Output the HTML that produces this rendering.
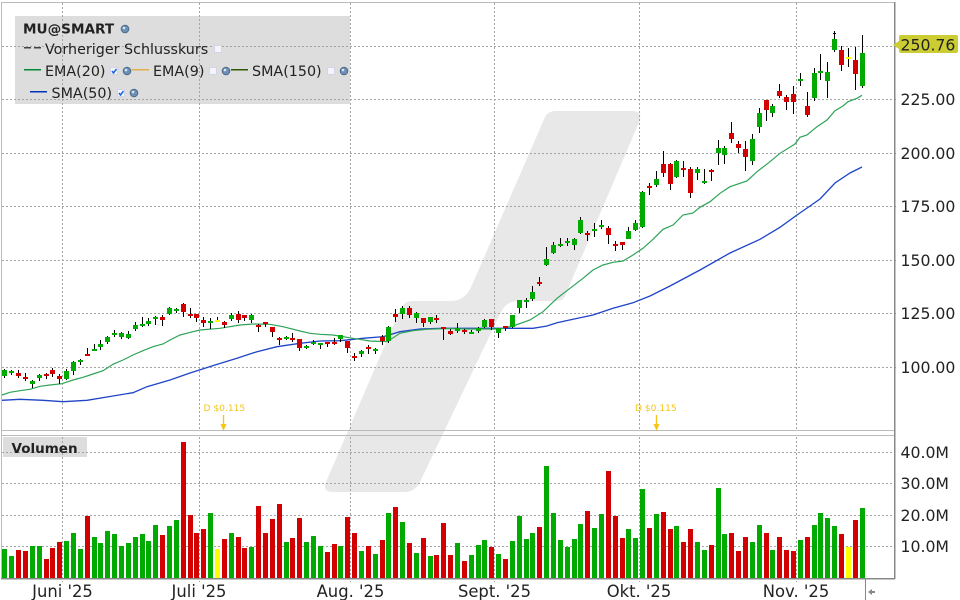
<!DOCTYPE html>
<html lang="de">
<head>
<meta charset="utf-8">
<title>MU@SMART</title>
<style>
html,body{margin:0;padding:0;background:#fff;width:960px;height:600px;overflow:hidden}
svg{display:block;position:absolute;left:0;top:0}
text{font-family:"DejaVu Sans","Liberation Sans",sans-serif;fill:#222}
.ax{font-size:15.7px}
.dt{font-size:16.4px;text-anchor:middle}
.lg{font-size:14.3px}
.dv{font-size:9.1px;fill:#f5c518}
</style>
</head>
<body>
<svg width="960" height="600" viewBox="0 0 960 600" xmlns="http://www.w3.org/2000/svg">
<!-- watermark -->
<path fill="#e8e8e8" d="M545 117Q548 111 556 111L632 111Q642 111 640 120L565 296Q563 301 556 301L518 301Q506 301 500 314L420 482Q415 492 405 492L333 492Q322 492 326 482L400 310Q404 301 412 301L450 301Q466 301 472 285Z"/>
<!-- legend backgrounds -->
<rect x="15" y="16" width="335" height="88" fill="#ddd"/>
<rect x="3" y="437" width="84" height="20" fill="#ddd"/>
<!-- grid -->
<g stroke="#a4a4a4" stroke-width="1" stroke-dasharray="2 2" fill="none" shape-rendering="crispEdges">
<path d="M2 46.5H896M2 99.5H896M2 153.5H896M2 206.5H896M2 260.5H896M2 313.5H896M2 367.5H896"/>
<path d="M2 452.5H894M2 483.5H894M2 515.5H894M2 546.5H894"/>
<path d="M62.5 3V430M199.5 3V430M350.5 3V430M494.5 3V430M639.5 3V430M796.5 3V430"/>
<path d="M62.5 437V582M199.5 437V582M350.5 437V582M494.5 437V582M639.5 437V582M796.5 437V582"/>
</g>
<!-- frame -->
<g stroke="#bbb" stroke-width="1" fill="none" shape-rendering="crispEdges">
<path d="M1.5 2V578M1 2.5H894M1 430.5H894M1 435.5H894"/>
</g>
<g stroke="#888" stroke-width="1.5" fill="none" shape-rendering="crispEdges">
<path d="M894.5 2V579M1 578.5H895"/>
</g>
<path d="M865.5 578V600" stroke="#888" stroke-width="1" shape-rendering="crispEdges"/>
<path d="M868 592L872 589V591H875V593H872V595Z" fill="#888"/>

<!-- volume bars -->
<path fill="#00aa00" shape-rendering="crispEdges" d="M2 549h5V578h-5zM9 556h5V578h-5zM30 546h5V578h-5zM37 546h5V578h-5zM64 541h5V578h-5zM71 533h5V578h-5zM78 549h5V578h-5zM92 537h5V578h-5zM98 543h5V578h-5zM105 531h5V578h-5zM112 534h5V578h-5zM119 546h5V578h-5zM126 543h5V578h-5zM133 537h5V578h-5zM140 534h5V578h-5zM146 541h5V578h-5zM153 525h5V578h-5zM167 526h5V578h-5zM174 520h5V578h-5zM208 513h5V578h-5zM229 533h5V578h-5zM249 547h5V578h-5zM284 542h5V578h-5zM304 542h5V578h-5zM311 536h5V578h-5zM318 546h5V578h-5zM338 546h5V578h-5zM359 551h5V578h-5zM373 554h5V578h-5zM386 513h5V578h-5zM400 522h5V578h-5zM414 553h5V578h-5zM428 556h5V578h-5zM455 543h5V578h-5zM469 555h5V578h-5zM476 545h5V578h-5zM482 540h5V578h-5zM496 554h5V578h-5zM510 541h5V578h-5zM517 516h5V578h-5zM524 539h5V578h-5zM530 533h5V578h-5zM544 466h5V578h-5zM551 513h5V578h-5zM558 540h5V578h-5zM565 547h5V578h-5zM572 539h5V578h-5zM578 524h5V578h-5zM592 528h5V578h-5zM599 514h5V578h-5zM626 529h5V578h-5zM633 538h5V578h-5zM640 489h5V578h-5zM654 514h5V578h-5zM674 526h5V578h-5zM695 542h5V578h-5zM702 550h5V578h-5zM716 488h5V578h-5zM722 534h5V578h-5zM750 542h5V578h-5zM757 525h5V578h-5zM770 550h5V578h-5zM798 540h5V578h-5zM812 525h5V578h-5zM818 513h5V578h-5zM825 518h5V578h-5zM832 526h5V578h-5zM860 508h5V578h-5z"/>
<path fill="#d20000" shape-rendering="crispEdges" d="M16 550h5V578h-5zM23 551h5V578h-5zM44 559h5V578h-5zM50 548h5V578h-5zM57 542h5V578h-5zM85 516h5V578h-5zM160 535h5V578h-5zM181 442h5V578h-5zM188 515h5V578h-5zM194 533h5V578h-5zM201 529h5V578h-5zM222 539h5V578h-5zM236 537h5V578h-5zM242 548h5V578h-5zM256 506h5V578h-5zM263 533h5V578h-5zM270 519h5V578h-5zM277 504h5V578h-5zM290 538h5V578h-5zM297 518h5V578h-5zM325 552h5V578h-5zM332 544h5V578h-5zM345 517h5V578h-5zM352 533h5V578h-5zM366 546h5V578h-5zM380 540h5V578h-5zM393 507h5V578h-5zM407 543h5V578h-5zM421 538h5V578h-5zM434 555h5V578h-5zM441 523h5V578h-5zM448 555h5V578h-5zM462 561h5V578h-5zM489 547h5V578h-5zM503 559h5V578h-5zM537 527h5V578h-5zM585 511h5V578h-5zM606 471h5V578h-5zM613 516h5V578h-5zM620 538h5V578h-5zM647 528h5V578h-5zM661 512h5V578h-5zM668 529h5V578h-5zM681 542h5V578h-5zM688 529h5V578h-5zM709 545h5V578h-5zM729 533h5V578h-5zM736 551h5V578h-5zM743 537h5V578h-5zM764 533h5V578h-5zM777 537h5V578h-5zM784 550h5V578h-5zM791 551h5V578h-5zM805 537h5V578h-5zM839 534h5V578h-5zM853 520h5V578h-5z"/>
<path fill="#ffff00" shape-rendering="crispEdges" d="M215 549h5V578h-5zM846 547h5V578h-5z"/>

<!-- moving averages -->
<polyline fill="none" stroke="#1f44c8" stroke-width="1.3" points="2,400.3 20,399.3 43,400.3 63,401.7 87,400.3 113,396 133,392.7 147,386.7 170,380 190,373 215,365 237,358.3 257,351.7 277,346.7 300,343.3 320,341 340,340.7 363,338.3 383,336.7 400,331.7 420,329 443,328.3 480,328.3 533,328.3 547,326 557,322.7 573,319.3 593,315 613,308.3 633,302.7 650,296 670,286 700,270 730,253 760,239.3 780,227.3 797,215 810,206 820,199 835,183 850,173 862,167"/>
<polyline fill="none" stroke="#2ea357" stroke-width="1.2" points="2,395 10,392.3 20,390.7 30,389.3 40,386.3 50,385 62,383.7 73,380 83,377.3 93,374 103,370.7 113,364.3 123,360 133,355 143,350.7 153,346.7 163,344 170,340 180,335 193,331.7 200,330 220,328.3 240,325 253,324 270,324.3 283,326.7 300,331 310,333.3 320,334.3 333,335 353,338.3 370,341 387,341.7 400,333.3 413,330.7 427,329.3 447,328.5 467,329 487,329 500,329 513,326 530,320 543,311.7 557,298.3 570,288.3 583,278.3 593,270 603,265 613,262.3 623,261 633,255 643,248.3 653,239.3 663,229.3 673,225 683,215 693,213 700,207.3 710,201.7 720,193.3 730,186.7 747,181 757,171.7 770,161.7 780,153.3 795,144 800,137.3 807,135 817,126.7 827,120 835,110.7 843,106 848,101.7 857,98.3 862,95.3"/>

<!-- candle wicks -->
<path stroke="#000" stroke-width="1" fill="none" shape-rendering="crispEdges" d="M4.5 369V378M11.5 370V375M18.5 370V378M25.5 373V381M32.5 380V388M39.5 374V381M46.5 373V379M52.5 368V377M59.5 374V384M66.5 369V380M73.5 361V375M80.5 359V365M87.5 348V356M94.5 344V351M100.5 340V350M107.5 336V344M114.5 330V337M121.5 332V339M128.5 331V339M135.5 322V331M142.5 317V327M148.5 318V326M155.5 316V325M162.5 315V326M169.5 307V315M176.5 308V313M183.5 303V317M190.5 308V318M196.5 314V322M203.5 317V327M210.5 318V329M217.5 317V322M224.5 321V328M231.5 313V321M238.5 311V323M244.5 315V321M251.5 314V323M258.5 324V332M265.5 322V327M272.5 327V337M279.5 337V345M286.5 336V340M292.5 333V342M299.5 339V351M306.5 345V349M313.5 340V345M320.5 343V349M327.5 342V347M334.5 338V345M340.5 335V342M347.5 341V353M354.5 353V361M361.5 350V357M368.5 345V354M375.5 348V354M382.5 335V345M388.5 326V343M395.5 309V322M402.5 306V319M409.5 306V318M416.5 312V323M423.5 318V327M430.5 317V324M436.5 315V323M443.5 327V340M450.5 329V335M457.5 323V333M464.5 329V334M471.5 330V334M478.5 327V333M484.5 319V328M491.5 319V330M498.5 328V338M505.5 326V331M512.5 315V328M519.5 300V313M526.5 298V308M532.5 286V301M539.5 277V286M546.5 247V266M553.5 242V254M560.5 238V247M567.5 238V246M574.5 238V250M580.5 217V234M587.5 231V241M594.5 223V237M601.5 220V229M608.5 226V244M615.5 241V251M622.5 242V250M628.5 227V239M635.5 220V231M642.5 191V228M649.5 183V195M656.5 171V187M663.5 151V177M670.5 163V190M676.5 160V178M683.5 161V177M690.5 167V198M697.5 167V180M704.5 169V184M711.5 169V181M718.5 140V165M724.5 146V164M731.5 122V143M738.5 141V153M745.5 141V171M752.5 134V165M759.5 108V133M766.5 100V121M772.5 104V117M779.5 84V98M786.5 95V110M793.5 86V114M800.5 73V86M807.5 92V117M814.5 68V101M820.5 54V80M827.5 62V98M834.5 31V52M841.5 46V71M848.5 48V67M855.5 47V90M862.5 35V88M833 33.5H836"/>
<!-- candle bodies -->
<path fill="#00aa00" shape-rendering="crispEdges" d="M2 370h5V376h-5zM9 371h5V373h-5zM30 381h5V384h-5zM37 375h5V378h-5zM64 371h5V379h-5zM71 362h5V371h-5zM78 360h5V362h-5zM92 349h5V351h-5zM98 344h5V347h-5zM105 337h5V342h-5zM112 333h5V335h-5zM119 333h5V337h-5zM126 334h5V338h-5zM133 325h5V329h-5zM140 324h5V326h-5zM146 321h5V324h-5zM153 317h5V319h-5zM167 308h5V314h-5zM174 309h5V311h-5zM208 321h5V323h-5zM229 315h5V319h-5zM249 315h5V320h-5zM284 337h5V339h-5zM304 346h5V348h-5zM311 342h5V344h-5zM318 343h5V345h-5zM338 335h5V339h-5zM359 351h5V354h-5zM373 349h5V351h-5zM386 327h5V341h-5zM400 308h5V314h-5zM414 313h5V318h-5zM428 317h5V322h-5zM455 328h5V331h-5zM469 332h5V334h-5zM476 328h5V331h-5zM482 320h5V327h-5zM496 328h5V333h-5zM510 315h5V327h-5zM517 300h5V308h-5zM524 300h5V302h-5zM530 292h5V299h-5zM544 259h5V265h-5zM551 245h5V253h-5zM558 244h5V246h-5zM565 241h5V243h-5zM572 239h5V245h-5zM578 220h5V233h-5zM592 229h5V231h-5zM599 225h5V227h-5zM626 231h5V239h-5zM633 223h5V230h-5zM640 192h5V227h-5zM654 179h5V185h-5zM674 161h5V177h-5zM695 169h5V173h-5zM702 181h5V183h-5zM716 148h5V153h-5zM722 148h5V155h-5zM750 139h5V161h-5zM757 113h5V127h-5zM770 106h5V113h-5zM798 79h5V81h-5zM812 73h5V98h-5zM818 71h5V73h-5zM825 72h5V81h-5zM832 39h5V50h-5zM860 53h5V86h-5z"/>
<path fill="#d20000" shape-rendering="crispEdges" d="M16 373h5V376h-5zM23 377h5V379h-5zM44 374h5V376h-5zM50 370h5V374h-5zM57 376h5V379h-5zM85 354h5V356h-5zM160 317h5V320h-5zM181 304h5V312h-5zM188 314h5V316h-5zM194 314h5V318h-5zM201 320h5V323h-5zM222 322h5V325h-5zM236 314h5V320h-5zM242 315h5V318h-5zM256 325h5V327h-5zM263 322h5V324h-5zM270 327h5V332h-5zM277 338h5V340h-5zM290 338h5V340h-5zM297 339h5V348h-5zM325 342h5V344h-5zM332 342h5V344h-5zM345 341h5V348h-5zM352 356h5V358h-5zM366 347h5V349h-5zM380 337h5V341h-5zM393 314h5V317h-5zM407 308h5V315h-5zM421 318h5V323h-5zM434 318h5V320h-5zM441 327h5V329h-5zM448 331h5V334h-5zM462 330h5V332h-5zM489 319h5V327h-5zM503 326h5V328h-5zM537 282h5V284h-5zM585 233h5V235h-5zM606 228h5V235h-5zM613 244h5V246h-5zM620 242h5V245h-5zM647 186h5V188h-5zM661 164h5V173h-5zM668 164h5V184h-5zM681 168h5V170h-5zM688 169h5V193h-5zM709 170h5V172h-5zM729 133h5V139h-5zM736 144h5V148h-5zM743 149h5V157h-5zM764 100h5V110h-5zM777 91h5V96h-5zM784 97h5V102h-5zM791 94h5V102h-5zM805 106h5V115h-5zM839 50h5V65h-5zM853 60h5V74h-5z"/>
<path fill="#ffff00" shape-rendering="crispEdges" d="M215 320h5V322h-5zM846 57h5V59h-5z"/>

<!-- dividend markers -->
<text class="dv" x="203.5" y="411">D $0.115</text>
<path d="M222.8 415h1.4V424h2.3L223.5 431L220.5 424h2.3Z" fill="#f5c518"/>
<text class="dv" x="635" y="411">D $0.115</text>
<path d="M655.8 415h1.4V424h2.3L656.5 431L653.5 424h2.3Z" fill="#f5c518"/>

<!-- price axis -->
<path d="M893 45L899 41V37Q899 35 901 35H956Q958 35 958 37V51Q958 53 956 53H901Q899 53 899 51V49Z" fill="#cccc33"/>
<text class="ax" x="900.5" y="50.5">250.76</text>
<text class="ax" x="900.5" y="105">225.00</text>
<text class="ax" x="900.5" y="159">200.00</text>
<text class="ax" x="900.5" y="212">175.00</text>
<text class="ax" x="900.5" y="266">150.00</text>
<text class="ax" x="900.5" y="319">125.00</text>
<text class="ax" x="900.5" y="373">100.00</text>
<text class="ax" x="900.5" y="458">40.0M</text>
<text class="ax" x="900.5" y="489">30.0M</text>
<text class="ax" x="900.5" y="521">20.0M</text>
<text class="ax" x="900.5" y="552">10.0M</text>

<!-- date axis -->
<text class="dt" x="62.5" y="597">Juni '25</text>
<text class="dt" x="199" y="597">Juli '25</text>
<text class="dt" x="350.5" y="597">Aug. '25</text>
<text class="dt" x="494.5" y="597">Sept. '25</text>
<text class="dt" x="639" y="597">Okt. '25</text>
<text class="dt" x="796" y="597">Nov. '25</text>

<!-- volume label -->
<text x="11.5" y="453" style="font-size:13.5px;font-weight:700">Volumen</text>

<!-- legend -->
<text x="23" y="33.5" style="font-size:13.6px;font-weight:700">MU@SMART</text>
<text class="lg" x="45" y="54">Vorheriger Schlusskurs</text>
<text class="lg" x="45" y="76">EMA(20)</text>
<text class="lg" x="153" y="76">EMA(9)</text>
<text class="lg" x="252" y="76">SMA(150)</text>
<text class="lg" x="51.5" y="98">SMA(50)</text>
<g fill="none" stroke-width="1.6" shape-rendering="crispEdges">
<path d="M24 47.7H31M34 47.7H41" stroke="#444"/>
<path d="M24 69.7H41" stroke="#008833"/>
<path d="M132 69.7H149" stroke="#e0b050"/>
<path d="M231 69.7H248" stroke="#2d5a00"/>
<path d="M30 91.7H47" stroke="#0033bb"/>
</g>
<!-- checkboxes -->
<g fill="#f4f4fc" stroke="#d4d4e6" stroke-width="1">
<rect x="214.5" y="45.5" width="7" height="7"/>
<rect x="110.5" y="67.5" width="7" height="7"/>
<rect x="209.5" y="67.5" width="7" height="7"/>
<rect x="327.5" y="67.5" width="7" height="7"/>
<rect x="117.5" y="89.5" width="7" height="7"/>
</g>
<path d="M112 71L113.5 73L116.5 69M119 93L120.5 95L123.5 91" fill="none" stroke="#1a66dd" stroke-width="1.5"/>
<!-- settings icons -->
<g fill="#6d8fb5" stroke="#4c6a8a" stroke-width="1">
<circle cx="125" cy="29" r="3.8"/>
<circle cx="127" cy="71" r="3.8"/>
<circle cx="226" cy="71" r="3.8"/>
<circle cx="344" cy="71" r="3.8"/>
<circle cx="134" cy="93" r="3.8"/>
</g>
<g fill="#d8e6f4">
<circle cx="124" cy="28" r="1.3"/>
<circle cx="126" cy="70" r="1.3"/>
<circle cx="225" cy="70" r="1.3"/>
<circle cx="343" cy="70" r="1.3"/>
<circle cx="133" cy="92" r="1.3"/>
</g>
</svg>
</body>
</html>
